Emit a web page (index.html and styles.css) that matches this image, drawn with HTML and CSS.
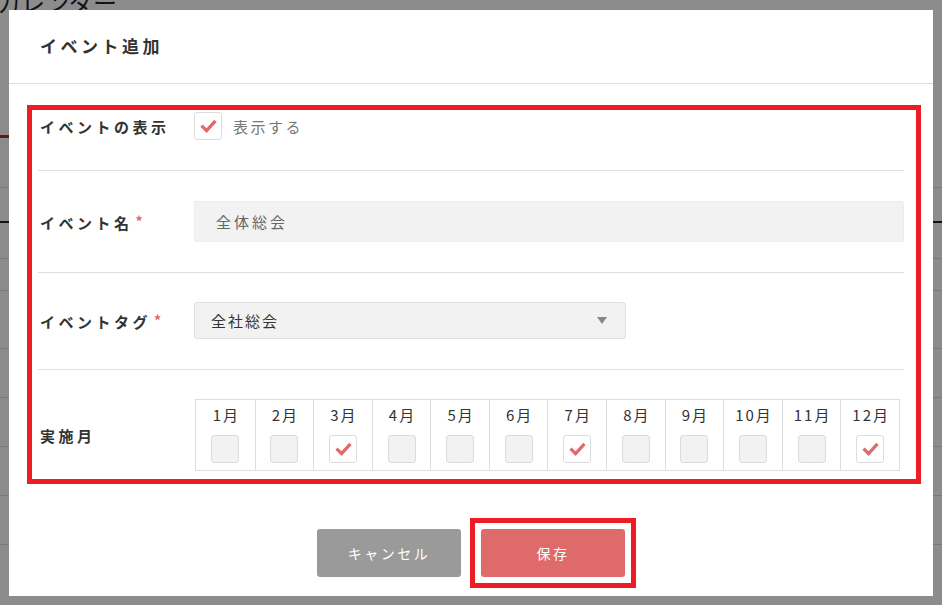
FILE: index.html
```html
<!DOCTYPE html>
<html lang="ja">
<head>
    <meta charset="UTF-8">
    <meta name="viewport" content="width=device-width, initial-scale=1.0">
    <title>イベント追加</title>
    <link rel="stylesheet" href="styles.css">
</head>
<body>
    <div class="page">
        <h2 class="page-title">カレンダー</h2>
        <div class="page-bar"></div>
        <div class="page-row r1"></div>
        <div class="page-row r2 dark"></div>
        <div class="page-row r3"></div>
        <div class="page-row r4"></div>
        <div class="page-row r5"></div>
        <div class="page-row r6"></div>
        <div class="page-row r7"></div>
        <div class="page-row r7"></div>
        <div class="page-row r7"></div>
    </div>

    <div class="overlay">
        <div class="modal">
            <div class="modal-header">
                <h1>イベント追加</h1>
            </div>

            <div class="modal-body">
                <div class="form-block">
                    <div class="form-row first">
                        <div class="label">イベントの表示</div>
                        <label class="check-line">
                            <span class="checkbox checked">
                                <svg viewBox="0 0 28 28"><polyline points="7,13.5 12.5,19 22,8.5"/></svg>
                            </span>
                            <span class="check-text">表示する</span>
                        </label>
                    </div>

                    <div class="form-row">
                        <div class="label">イベント名<span class="req">*</span></div>
                        <div class="text-input">全体総会</div>
                    </div>

                    <div class="form-row third">
                        <div class="label">イベントタグ<span class="req">*</span></div>
                        <div class="select">
                            <span>全社総会</span>
                            <span class="arrow"></span>
                        </div>
                    </div>

                    <div class="form-row last">
                        <div class="label">実施月</div>
                        <div class="months">
                            <div class="month"><span>1月</span><span class="checkbox"></span></div>
                            <div class="month"><span>2月</span><span class="checkbox"></span></div>
                            <div class="month"><span>3月</span><span class="checkbox checked"><svg viewBox="0 0 28 28"><polyline points="7,13.5 12.5,19 22,8.5"/></svg></span></div>
                            <div class="month"><span>4月</span><span class="checkbox"></span></div>
                            <div class="month"><span>5月</span><span class="checkbox"></span></div>
                            <div class="month"><span>6月</span><span class="checkbox"></span></div>
                            <div class="month"><span>7月</span><span class="checkbox checked"><svg viewBox="0 0 28 28"><polyline points="7,13.5 12.5,19 22,8.5"/></svg></span></div>
                            <div class="month"><span>8月</span><span class="checkbox"></span></div>
                            <div class="month"><span>9月</span><span class="checkbox"></span></div>
                            <div class="month"><span>10月</span><span class="checkbox"></span></div>
                            <div class="month"><span>11月</span><span class="checkbox"></span></div>
                            <div class="month"><span>12月</span><span class="checkbox checked"><svg viewBox="0 0 28 28"><polyline points="7,13.5 12.5,19 22,8.5"/></svg></span></div>
                        </div>
                    </div>
                </div>
            </div>

            <div class="modal-footer">
                <button class="btn btn-cancel">キャンセル</button>
                <div class="highlight">
                    <button class="btn btn-save">保存</button>
                </div>
            </div>
        </div>
    </div>
</body>
</html>
```

FILE: styles.css
```css
* {
    box-sizing: border-box;
}
body {
    margin: 0;
    font-family: "Noto Sans CJK JP", "Noto Sans", sans-serif;
    color: #333;
    background: #fff;
    width: 942px;
    height: 605px;
    overflow: hidden;
}

/* page behind the dialog */
.page {
    height: 605px;
}
.page-title {
    margin: -14px 0 0 -3px;
    font-size: 24px;
    font-weight: normal;
    color: #222;
    line-height: 32px;
}
.page-bar {
    margin-top: 117px;
    width: 120px;
    height: 3px;
    background: #b03030;
}
.page-row {
    border-bottom: 1px solid #ddd;
}
.page-row.r1 { height: 50px; }
.page-row.r2 { height: 35px; }
.page-row.dark { border-bottom: 2px solid #223; }
.page-row.r3 { height: 36px; }
.page-row.r4 { height: 32px; }
.page-row.r5 { height: 58px; }
.page-row.r6 { height: 49px; }
.page-row.r7 { height: 49px; }

.overlay {
    position: fixed;
    inset: 0;
    background: rgba(0, 0, 0, 0.45);
}
.modal {
    margin: 10px 0 0 9px;
    width: 924px;
    height: 586px;
    background: #fff;
}
.modal-header {
    height: 74px;
    border-bottom: 1px solid #ddd;
    padding: 0 31px;
}
.modal-header h1 {
    margin: 0;
    font-size: 17px;
    font-weight: bold;
    letter-spacing: 3.5px;
    line-height: 72px;
    color: #333;
}

.modal-body {
    padding: 21px 12px 0 18px;
}
.form-block {
    border: 5px solid #ee1c25;
    padding: 0 12px 0 6px;
}
.form-row {
    display: flex;
    align-items: center;
    padding: 30px 0;
    border-bottom: 1px solid #ddd;
}
.form-row.first {
    padding: 2px 0 30px;
}
.form-row.third {
    padding: 29px 0 30px;
}
.form-row.last {
    padding: 29px 0 8px;
    border-bottom: none;
}
.label {
    width: 156px;
    flex-shrink: 0;
    padding-left: 2px;
    font-size: 15px;
    font-weight: bold;
    letter-spacing: 3.5px;
    color: #333;
}
.req {
    color: #e06666;
    font-size: 14px;
    margin-left: 3px;
    vertical-align: 2px;
}

.check-line {
    display: flex;
    align-items: center;
    gap: 11px;
}
.checkbox {
    display: block;
    width: 28px;
    height: 28px;
    border: 1px solid #dcdcdc;
    border-radius: 3px;
    background: #f2f2f2;
}
.checkbox.checked {
    background: #fff;
}
.checkbox svg {
    display: block;
    width: 26px;
    height: 26px;
}
.checkbox polyline {
    fill: none;
    stroke: #e06a6a;
    stroke-width: 3.5;
}
.check-text {
    font-size: 15px;
    letter-spacing: 2.5px;
    color: #777;
}

.text-input {
    width: 710px;
    height: 41px;
    line-height: 39px;
    padding-left: 21px;
    background: #f2f2f2;
    border: 1px solid #ececec;
    border-radius: 2px;
    font-size: 15px;
    letter-spacing: 3px;
    color: #666;
}
.select {
    width: 432px;
    height: 37px;
    display: flex;
    align-items: center;
    justify-content: space-between;
    padding: 0 18px 0 16px;
    background: #f2f2f2;
    border: 1px solid #ddd;
    border-radius: 3px;
    font-size: 15px;
    letter-spacing: 2px;
    color: #333;
}
.arrow {
    width: 0;
    height: 0;
    border-left: 5px solid transparent;
    border-right: 5px solid transparent;
    border-top: 7px solid #888;
}

.months {
    margin-left: 1px;
    display: grid;
    grid-template-columns: repeat(12, 1fr);
    width: 705px;
    border: 1px solid #ddd;
}
.month {
    height: 70px;
    display: flex;
    flex-direction: column;
    align-items: center;
    padding-top: 4px;
    gap: 9px;
    border-left: 1px solid #ddd;
    font-size: 15px;
    letter-spacing: 2px;
    line-height: 22px;
    color: #333;
}
.month:first-child {
    border-left: none;
}
.month span:first-child {
    padding-left: 2px;
}

.modal-footer {
    display: flex;
    justify-content: center;
    gap: 20px;
    padding-top: 45px;
}
.highlight {
    margin: -11px;
    padding: 6px;
    border: 5px solid #ee1c25;
}
.btn {
    display: block;
    width: 144px;
    height: 48px;
    border: none;
    border-radius: 3px;
    font-family: "Noto Sans CJK JP", "Noto Sans", sans-serif;
    font-size: 14px;
    letter-spacing: 2.5px;
    color: #fff;
    cursor: pointer;
}
.btn-cancel {
    background: #9a9a9a;
}
.btn-save {
    background: #df6a6a;
}
```
